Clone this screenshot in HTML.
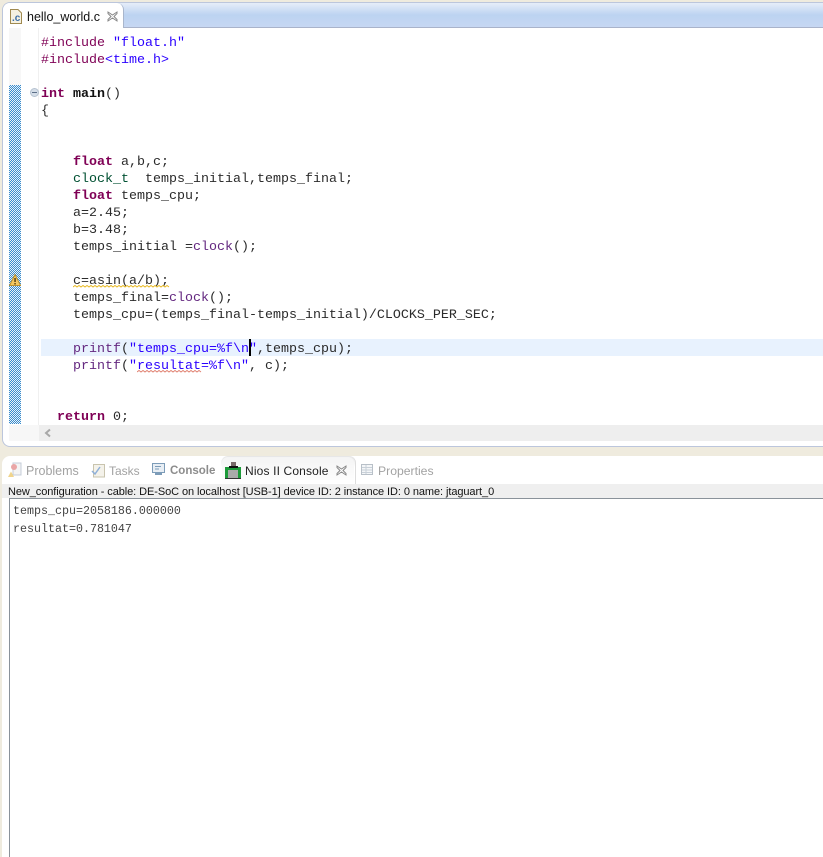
<!DOCTYPE html>
<html><head><meta charset="utf-8"><style>
html,body{margin:0;padding:0;background:#fff}
#r{position:relative;width:823px;height:857px;overflow:hidden;background:#efebde;font-family:"Liberation Sans",sans-serif}
#r div{position:absolute}
.l{font-family:"Liberation Mono",monospace;font-size:13.33px;line-height:17px;height:17px;white-space:pre;color:#2b2b2b;left:41px;margin-top:1px}
.l b{color:#7f0055}
.s{color:#2a00ff}.f{color:#642880}.t{color:#005032}.k{color:#7f0055}.d{color:#642880}
.c{font-family:"Liberation Mono",monospace;font-size:11.67px;line-height:18px;white-space:pre;color:#444;left:13px}
.tb{font-size:12px;line-height:16px;top:463px;color:#a2a2a2;white-space:pre}
</style></head><body><div id="r">
<div style="left:2px;top:2px;height:443px;border:1px solid #bcc6dc;border-right:0;border-radius:8px 0 0 8px;background:#fff;width:822px"></div>
<div style="left:3px;top:3px;width:820px;height:24px;background:linear-gradient(#e6edf9,#bcd3f1 50%,#c6d7f2);border-radius:7px 0 0 0"></div>
<div style="left:3px;top:27px;width:820px;height:1px;background:#a9b3ca"></div>
<div style="left:3px;top:3px;width:120px;height:25px;background:#fff;border-radius:7px 7px 0 0;border-right:1px solid #a9b6cc"></div>
<svg style="position:absolute;left:10px;top:9px" width="12" height="15"><path d="M.5.5H8L11.5 4V14.5H.5Z" fill="#f5f1e2" stroke="#a08a50"/><text x="2" y="12" font-family="Liberation Sans" font-size="10" font-weight="bold" fill="#3c6ea8">.c</text></svg>
<div style="left:27px;top:9px;font-size:12.5px;line-height:16px;color:#111;white-space:pre">hello_world.c</div>
<svg style="position:absolute;left:107px;top:11px" width="11" height="11"><path d="M1 1L5.5 4L10 1L10 2.5L7 5.5L10 8.5L10 10L5.5 7L1 10L1 8.5L4 5.5L1 2.5Z" fill="#fff" stroke="#888"/></svg>
<div style="left:9px;top:28px;width:12px;height:57px;background:#f7f7f7"></div>
<div style="left:9px;top:85px;width:12px;height:339px;background-color:#fff;background-image:repeating-conic-gradient(#3a8ccc 0 25%,#eaf3fa 0 50%);background-size:2px 2px"></div>
<div style="left:38px;top:28px;width:1px;height:397px;background:#f0f0f0"></div>
<div style="left:41px;top:339px;width:782px;height:17px;background:#e8f2fe"></div>
<div style="left:30px;top:88px;width:9px;height:9px;border-radius:50%;background:#d5dee8;border:.5px solid #b5c2d0;box-sizing:border-box"></div>
<div style="left:32px;top:92px;width:5px;height:1px;background:#5c6f88"></div>
<svg style="position:absolute;left:9px;top:274px" width="12" height="12"><path d="M6 .5L11.5 11.5H.5Z" fill="#f4c860" stroke="#b89030"/><rect x="5.3" y="4" width="1.5" height="4" fill="#5a4010"/><rect x="5.3" y="9" width="1.5" height="1.5" fill="#5a4010"/></svg>
<div class="l" style="top:34px"><span class="k">#include</span> <span class="s">"float.h"</span></div>
<div class="l" style="top:51px"><span class="k">#include</span><span class="s">&lt;time.h&gt;</span></div>
<div class="l" style="top:85px"><b>int</b> <b style="color:#111">main</b>()</div>
<div class="l" style="top:102px">{</div>
<div class="l" style="top:153px">    <b>float</b> a,b,c;</div>
<div class="l" style="top:170px">    <span class="t">clock_t</span>  temps_initial,temps_final;</div>
<div class="l" style="top:187px">    <b>float</b> temps_cpu;</div>
<div class="l" style="top:204px">    a=2.45;</div>
<div class="l" style="top:221px">    b=3.48;</div>
<div class="l" style="top:238px">    temps_initial =<span class="f">clock</span>();</div>
<div class="l" style="top:272px">    c=asin(a/b);</div>
<div class="l" style="top:289px">    temps_final=<span class="f">clock</span>();</div>
<div class="l" style="top:306px">    temps_cpu=(temps_final-temps_initial)/CLOCKS_PER_SEC;</div>
<div class="l" style="top:340px">    <span class="f">printf</span>(<span class="s">"temps_cpu=%f\n"</span>,temps_cpu);</div>
<div class="l" style="top:357px">    <span class="f">printf</span>(<span class="s">"resultat=%f\n"</span>, c);</div>
<div class="l" style="top:408px">  <b>return</b> 0;</div>
<div style="left:249px;top:339px;width:2px;height:17px;background:#000"></div>
<svg style="position:absolute;left:73px;top:285px" width="97" height="3"><path d="M0 2L2 0.5L4 2L6 0.5L8 2L10 0.5L12 2L14 0.5L16 2L18 0.5L20 2L22 0.5L24 2L26 0.5L28 2L30 0.5L32 2L34 0.5L36 2L38 0.5L40 2L42 0.5L44 2L46 0.5L48 2L50 0.5L52 2L54 0.5L56 2L58 0.5L60 2L62 0.5L64 2L66 0.5L68 2L70 0.5L72 2L74 0.5L76 2L78 0.5L80 2L82 0.5L84 2L86 0.5L88 2L90 0.5L92 2L94 0.5L96 2" fill="none" stroke="#e8b820"/></svg>
<svg style="position:absolute;left:137px;top:370px" width="66" height="3"><path d="M0 2L2 0.5L4 2L6 0.5L8 2L10 0.5L12 2L14 0.5L16 2L18 0.5L20 2L22 0.5L24 2L26 0.5L28 2L30 0.5L32 2L34 0.5L36 2L38 0.5L40 2L42 0.5L44 2L46 0.5L48 2L50 0.5L52 2L54 0.5L56 2L58 0.5L60 2L62 0.5L64 2" fill="none" stroke="#e08070"/></svg>
<div style="left:9px;top:425px;width:30px;height:16px;background:#f7f7f7"></div>
<div style="left:39px;top:425px;width:784px;height:16px;background:#eee"></div>
<svg style="position:absolute;left:44px;top:428px" width="8" height="10"><path d="M6 1.5L2 5L6 8.5" fill="none" stroke="#a8a8a8" stroke-width="2"/></svg>

<div style="left:2px;top:456px;width:821px;height:401px;background:#fff;border-radius:8px 0 0 0"></div>
<div style="left:221px;top:456px;width:134px;height:28px;background:linear-gradient(#e6e6e6,#fff 40%);border-radius:7px 7px 0 0;border-right:1px solid #ddd"></div>
<div style="left:222px;top:457px;width:132px;height:27px;background:linear-gradient(#f4f4f4,#fff);border-radius:6px 6px 0 0"></div>
<svg style="position:absolute;left:8px;top:462px" width="14" height="16"><rect x="5" y="1" width="8" height="12" fill="#f4f4f4" stroke="#c4ccd8"/><circle cx="6" cy="5" r="3" fill="#eaa6a6"/><path d="M3 9.5L6 15H0Z" fill="#f0d48c"/></svg>
<div class="tb" style="left:26px;font-size:12.5px">Problems</div>
<svg style="position:absolute;left:91px;top:462px" width="15" height="16"><rect x="2.500" y="2.500" width="11" height="12.500" fill="#f4f2ea" stroke="#c9c4ae"/><path d="M1 9L4 12L9 5" fill="none" stroke="#8fb0d8" stroke-width="1.500"/></svg>
<div class="tb" style="left:109px">Tasks</div>
<svg style="position:absolute;left:152px;top:463px" width="14" height="13"><rect x=".5" y=".5" width="12" height="9" fill="#e8eef4" stroke="#7d9cb8"/><rect x="3" y="10" width="7" height="2" fill="#7d9cb8"/><path d="M3 3.500H9M3 6H7" stroke="#7d9cb8"/></svg>
<div class="tb" style="left:170px;color:#8c8c8c;font-weight:bold;font-size:11.500px">Console</div>
<div style="left:225px;top:467px;width:16px;height:11px;background:#1d9a3a"></div>
<div style="left:225px;top:478px;width:16px;height:1px;background:#333"></div>
<div style="left:231px;top:462px;width:5px;height:5px;background:#7a6a6a"></div>
<div style="left:229px;top:466px;width:9px;height:2px;background:#111"></div>
<div style="left:228px;top:470px;width:10px;height:8px;background:#aaa"></div>
<div class="tb" style="left:245px;color:#222;letter-spacing:.15px">Nios II Console</div>
<svg style="position:absolute;left:336px;top:465px" width="11" height="11"><path d="M1 1L5.500 4L10 1L10 2.500L7 5.500L10 8.500L10 10L5.500 7L1 10L1 8.500L4 5.500L1 2.500Z" fill="#fff" stroke="#888"/></svg>
<svg style="position:absolute;left:361px;top:464px" width="13" height="12"><rect x=".5" y=".5" width="11" height="10" fill="#f4f6f8" stroke="#b8c0c8"/><path d="M1 3.500H11M1 6H11M1 8.500H11M5 1V10" stroke="#c8d0d8"/></svg>
<div class="tb" style="left:378px;font-size:12.2px">Properties</div>
<div style="left:2px;top:484px;width:821px;height:14px;background:#efefef"></div>
<div style="left:8px;top:485px;font-size:11px;line-height:14px;color:#111;white-space:pre;letter-spacing:-.08px">New_configuration - cable: DE-SoC on localhost [USB-1] device ID: 2 instance ID: 0 name: jtaguart_0</div>
<div style="left:9px;top:498px;width:814px;height:1px;background:#8a929a"></div>
<div style="left:9px;top:498px;width:1px;height:359px;background:#8a929a"></div>
<div class="c" style="top:502px">temps_cpu=2058186.000000</div>
<div class="c" style="top:520px">resultat=0.781047</div>
</div></body></html>
